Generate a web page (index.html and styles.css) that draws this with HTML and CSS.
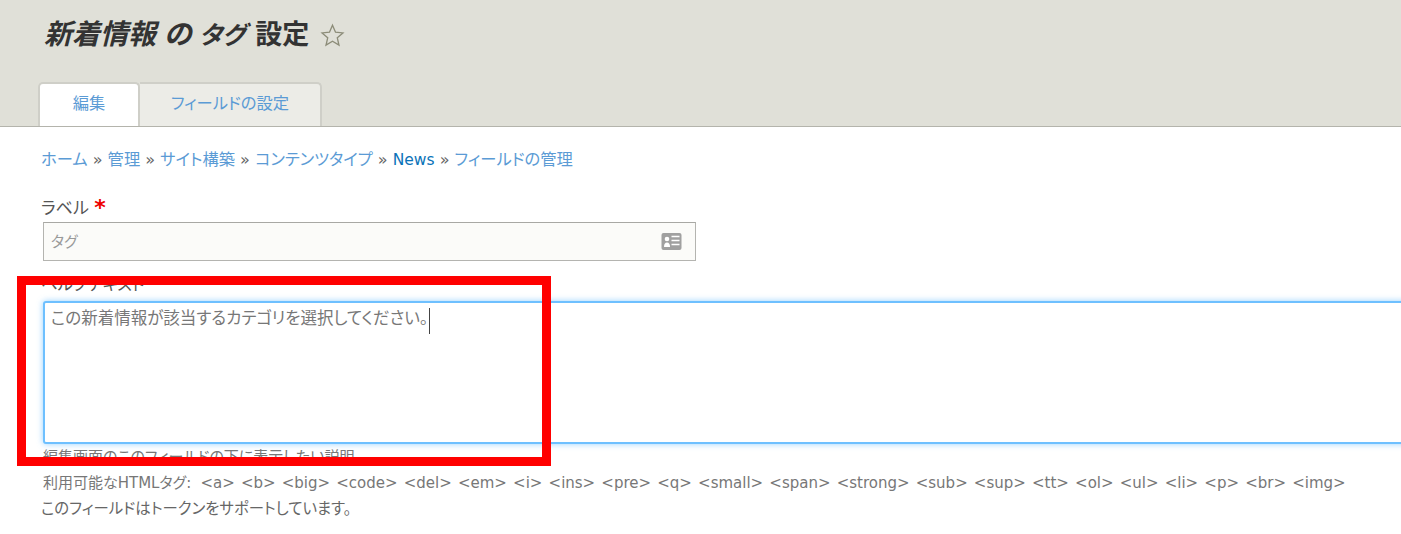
FILE: index.html
```html
<!DOCTYPE html>
<html lang="ja">
<head>
<meta charset="utf-8">
<title>新着情報 の タグ 設定</title>
<link rel="stylesheet" href="styles.css">
</head>
<body>
<header class="head">
  <div class="title-row">
    <h1 class="title"><em>新着情報 の <span class="title-tag">タグ</span></em> 設定</h1>
    <svg class="star" viewBox="0 0 24 24" width="25" height="25"><path d="M12 2.200l2.900 6.600 7.100.7-5.400 4.700 1.600 7-6.200-3.700-6.200 3.700 1.600-7L2 9.500l7.100-.7z" fill="none" stroke="#8c8c78" stroke-width="1.300"/></svg>
  </div>
  <nav class="tabs">
    <a class="tab active">編集</a>
    <a class="tab">フィールドの設定</a>
  </nav>
</header>
<main class="content">
  <div class="crumbs">
    <a>ホーム</a><i>»</i><a>管理</a><i>»</i><a>サイト構築</a><i>»</i><a>コンテンツタイプ</a><i>»</i><a class="strong">News</a><i>»</i><a>フィールドの管理</a>
  </div>
  <label class="label">ラベル <span class="req">*</span></label>
  <div class="input">
    <span class="input-text">タグ</span>
    <svg viewBox="0 0 20 18" width="21" height="18"><rect width="20" height="17" rx="2" fill="#a0a0a0"/><circle cx="5.500" cy="6" r="2.300" fill="#fff"/><path d="M2.500 14c0-3 1-4.500 3-4.500s3 1.500 3 4.500z" fill="#fff"/><path d="M10 3.500h8M10 7.500h8M10 11.500h8" stroke="#fff" stroke-width="1.700"/></svg>
  </div>
  <label class="label help">ヘルプテキスト</label>
  <div class="textarea">この新着情報が該当するカテゴリを選択してください。<span class="caret"></span></div>
  <p class="desc first">編集画面のこのフィールドの下に表示したい説明</p>
  <p class="desc tags"><span class="tags-lead">利用可能なHTMLタグ:</span> &lt;a&gt; &lt;b&gt; &lt;big&gt; &lt;code&gt; &lt;del&gt; &lt;em&gt; &lt;i&gt; &lt;ins&gt; &lt;pre&gt; &lt;q&gt; &lt;small&gt; &lt;span&gt; &lt;strong&gt; &lt;sub&gt; &lt;sup&gt; &lt;tt&gt; &lt;ol&gt; &lt;ul&gt; &lt;li&gt; &lt;p&gt; &lt;br&gt; &lt;img&gt;</p>
  <p class="desc token">このフィールドはトークンをサポートしています。</p>
</main>
<div class="highlight"></div>
</body>
</html>
```
FILE: styles.css
```css
* { box-sizing: border-box; }
html, body { margin: 0; height: 534px; overflow: hidden; }
body { background: #fff; font-family: "DejaVu Sans", "Noto Sans CJK JP", sans-serif; font-feature-settings: "palt"; color: #555; position: relative; width: 1401px; }
.head { height: 127px; background: #e0e0d8; border-bottom: 1px solid #b4b4ac; padding: 15px 0 0 38px; display: flex; flex-direction: column; }
.title-row { display: flex; align-items: center; height: 40px; margin-left: 6px; gap: 11px; }
.title { margin: 0; font-family: "Liberation Sans", "Noto Sans CJK JP", sans-serif; font-size: 27px; line-height: 40px; font-weight: 700; color: #333; white-space: pre; }
.title em { font-style: italic; font-size: 28px; }
.title-tag { font-size: 25px; margin-right: 2px; }
.tabs { display: flex; margin-top: 27px; height: 44px; }
.tab { display: flex; align-items: center; justify-content: center; padding-bottom: 6px; font-size: 16.300px; color: #5b9bd5; background: #ecece7; border: 2px solid #cfcfc8; border-bottom: 0; border-left: 0; border-radius: 0 5px 0 0; width: 182px; height: 44px; }
.tab.active { background: #fff; width: 102px; border-left: 2px solid #cfcfc8; border-radius: 5px 5px 0 0; }
.content { padding: 21px 0 0 41px; overflow: hidden; }
.crumbs { display: flex; font-size: 16.300px; line-height: 24px; color: #5b9bd5; height: 24px; white-space: nowrap; }
.crumbs i { font-style: normal; color: #666; width: 20px; text-align: center; font-size: 16px; }
.crumbs .strong { color: #0b73b8; font-size: 15.500px; }
.label { display: block; font-size: 17px; line-height: 24px; color: #555; margin-top: 24px; height: 24px; }
.req { color: #e00; font-size: 22px; font-weight: 700; line-height: 16px; vertical-align: -1px; }
.input { margin: 2px 0 0 2px; width: 653px; height: 39px; background: #fbfbf9; border: 1px solid #b4b4b0; border-top-color: #a8a8a4; padding: 0 13px 0 7px; display: flex; align-items: center; justify-content: space-between; font-size: 15px; color: #999; }
.input-text { padding-bottom: 3px; }
.help { margin-top: 12px; font-size: 16.300px; }
.textarea { margin: 4px 0 0 2px; width: 1420px; height: 143px; border: 2px solid #6ec0ff; border-radius: 3px; box-shadow: 0 0 6px rgba(110, 192, 255, .7); padding: 4px 6px; font-size: 16.500px; line-height: 24px; color: #777; background: #fff; }
.caret { display: inline-block; width: 1px; height: 26px; background: #444; vertical-align: top; margin-top: 1px; margin-left: 1px; }
.desc { margin: 0; font-size: 15px; line-height: 25px; color: #777; white-space: nowrap; }
.first { margin: 1px 0 1px 2px; }
.tags { margin-left: 2px; word-spacing: 1.400px; }
.tags-lead { word-spacing: 0; margin-right: 3px; }
.token { color: #666; font-size: 15.400px; margin-top: 1px; }
.highlight { position: absolute; left: 17px; top: 276px; width: 534px; height: 190px; border: 9px solid #f00; }
```
